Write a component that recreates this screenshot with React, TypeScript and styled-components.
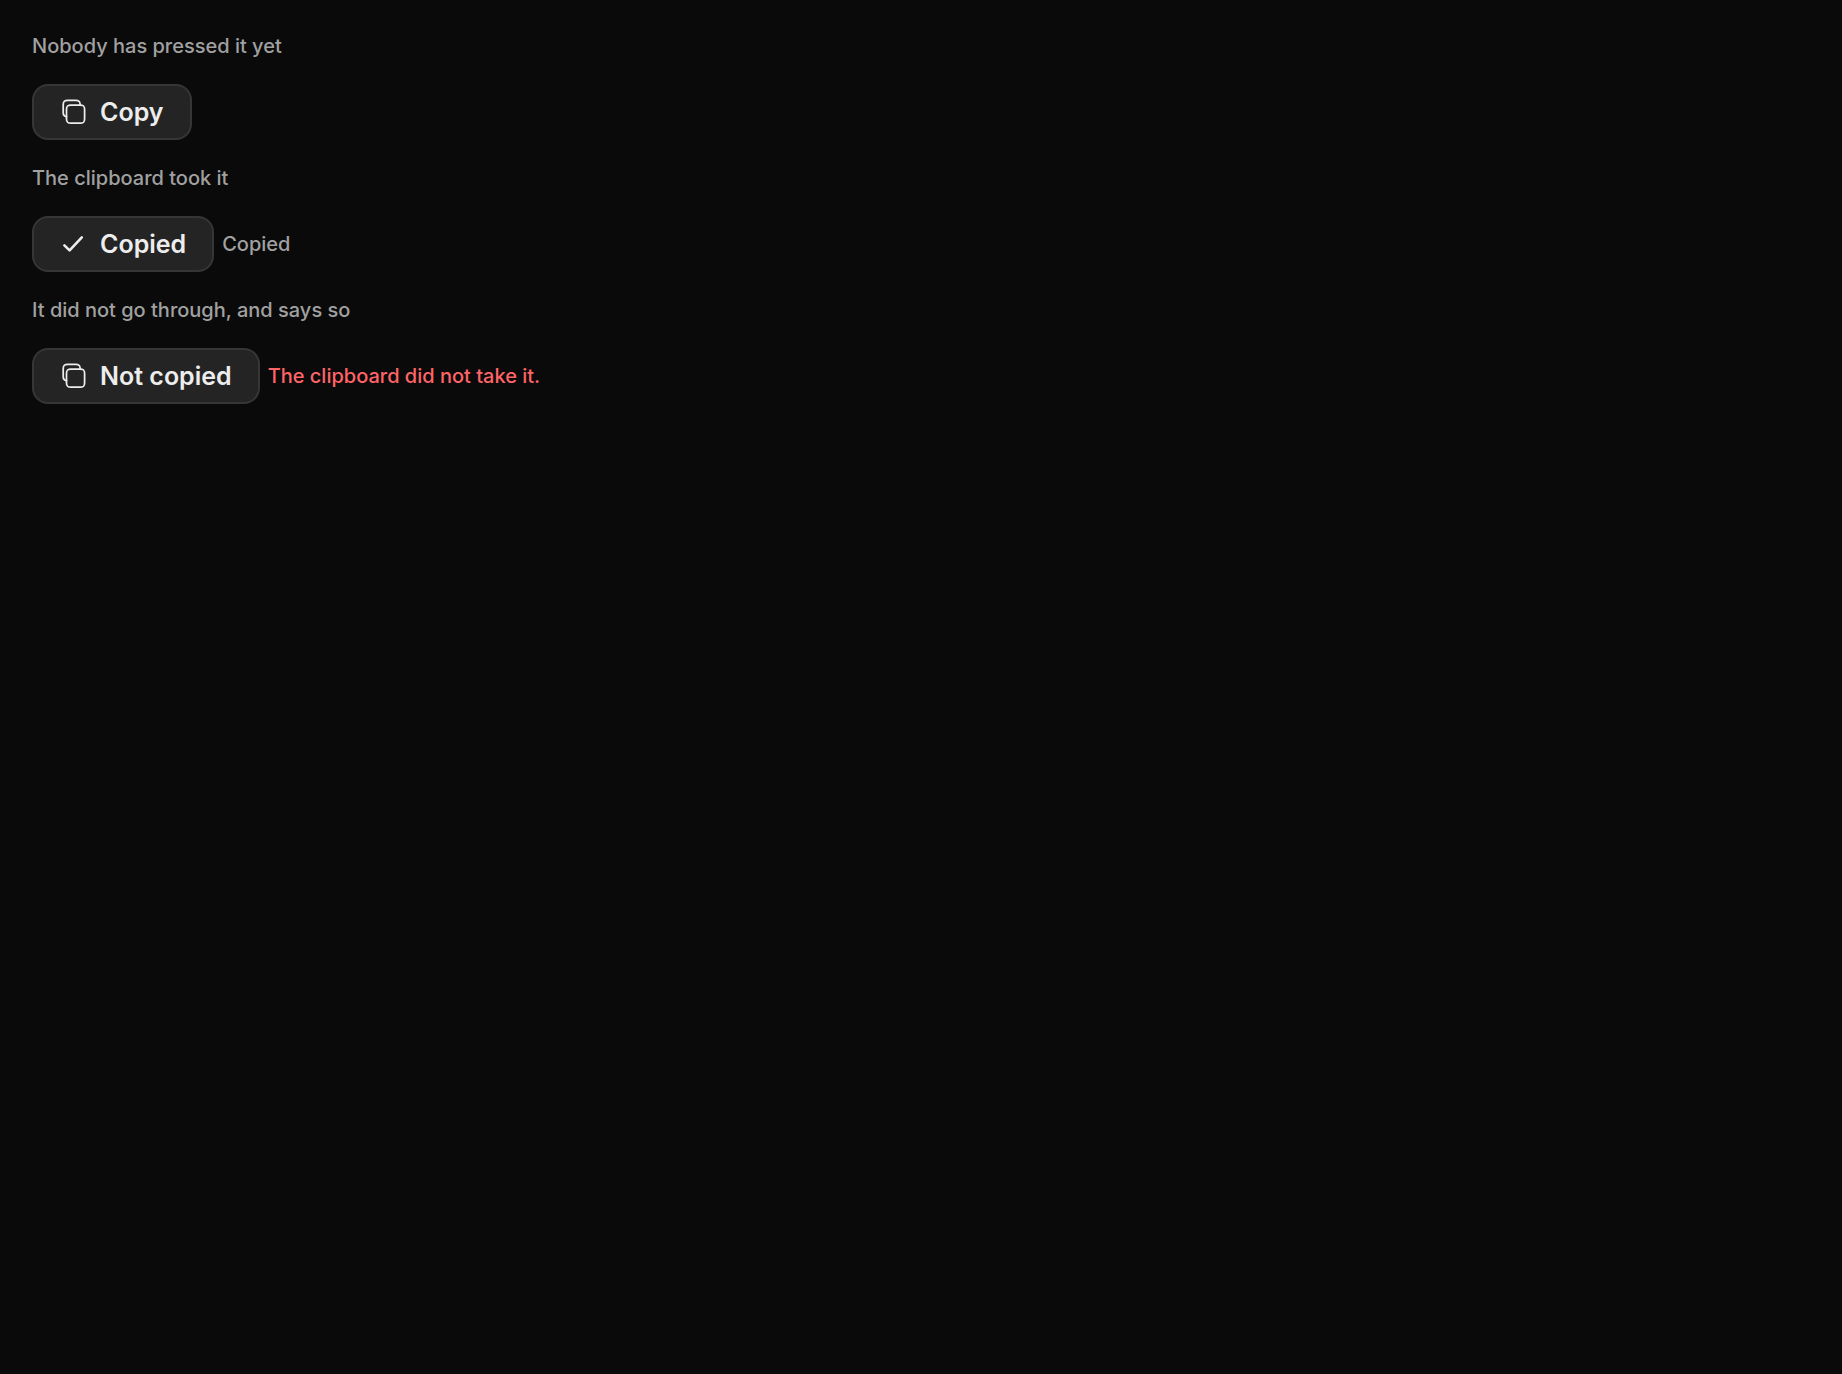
import React from "react";
import styled, { createGlobalStyle } from "styled-components";

const GlobalStyle = createGlobalStyle`
  *, *::before, *::after { box-sizing: border-box; }
  body {
    margin: 0;
    background: #0a0a0a;
    color: #ededed;
    font-family: Inter, "Liberation Sans", sans-serif;
    -webkit-font-smoothing: antialiased;
  }
`;

const Page = styled.main`
  display: flex;
  flex-direction: column;
  gap: 24px;
  padding: 32px;
`;

const Caption = styled.p`
  margin: 0;
  font-size: 20px;
  font-weight: 450;
  line-height: 28px;
  color: #a1a1a1;
`;

const Row = styled.div`
  display: flex;
  align-items: center;
  gap: 8px;
`;

const CopyButton = styled.button`
  display: inline-flex;
  align-items: center;
  gap: 12px;
  height: 56px;
  padding: 0 26px;
  border: 2px solid #363636;
  border-radius: 16px;
  background: #242424;
  color: #ededed;
  font: inherit;
  font-size: 25px;
  font-weight: 600;
  line-height: 28px;
  cursor: pointer;
`;

const Status = styled.span<{ $failed?: boolean }>`
  font-size: 20px;
  font-weight: 450;
  line-height: 28px;
  color: ${(p) => (p.$failed ? "#ff6467" : "#a1a1a1")};
`;

const Glyph = styled.svg`
  flex: none;
  width: 28px;
  height: 28px;
  fill: none;
  stroke: currentColor;
  stroke-linecap: round;
  stroke-linejoin: round;
`;

function CopyIcon() {
  return (
    <Glyph viewBox="0 0 28 28" strokeWidth="1.75" aria-hidden="true">
      <path d="M6.5 11.5C6.5 8 7.5 7 11 7H20.1C23.6 7 24.6 8 24.6 11.5V20.7C24.6 24.2 23.6 25.2 20.1 25.2H11C7.5 25.2 6.5 24.2 6.5 20.7Z" />
      <path d="M20.2 7C20.1 3.4 19.2 2.4 15.7 2.4H7.7C4.2 2.4 3.2 3.4 3.2 6.9V14.6C3.2 17.5 4 18.5 6.5 18.7" />
    </Glyph>
  );
}

function CheckIcon() {
  return (
    <Glyph viewBox="0 0 28 28" strokeWidth="2.6" aria-hidden="true">
      <path d="M4.4 15.4L9.6 20.4L21.8 7.4" />
    </Glyph>
  );
}

type Outcome = "idle" | "copied" | "failed";

const labels: Record<Outcome, string> = {
  idle: "Copy",
  copied: "Copied",
  failed: "Not copied",
};

const messages: Record<Outcome, string> = {
  idle: "",
  copied: "Copied",
  failed: "The clipboard did not take it.",
};

const examples: { outcome: Outcome; caption: string }[] = [
  { outcome: "idle", caption: "Nobody has pressed it yet" },
  { outcome: "copied", caption: "The clipboard took it" },
  { outcome: "failed", caption: "It did not go through, and says so" },
];

export default function App() {
  return (
    <>
      <GlobalStyle />
      <Page>
        {examples.map(({ outcome, caption }) => (
          <React.Fragment key={outcome}>
            <Caption>{caption}</Caption>
            <Row>
              <CopyButton type="button">
                {outcome === "copied" ? <CheckIcon /> : <CopyIcon />}
                {labels[outcome]}
              </CopyButton>
              {messages[outcome] && (
                <Status role="status" $failed={outcome === "failed"}>
                  {messages[outcome]}
                </Status>
              )}
            </Row>
          </React.Fragment>
        ))}
      </Page>
    </>
  );
}
